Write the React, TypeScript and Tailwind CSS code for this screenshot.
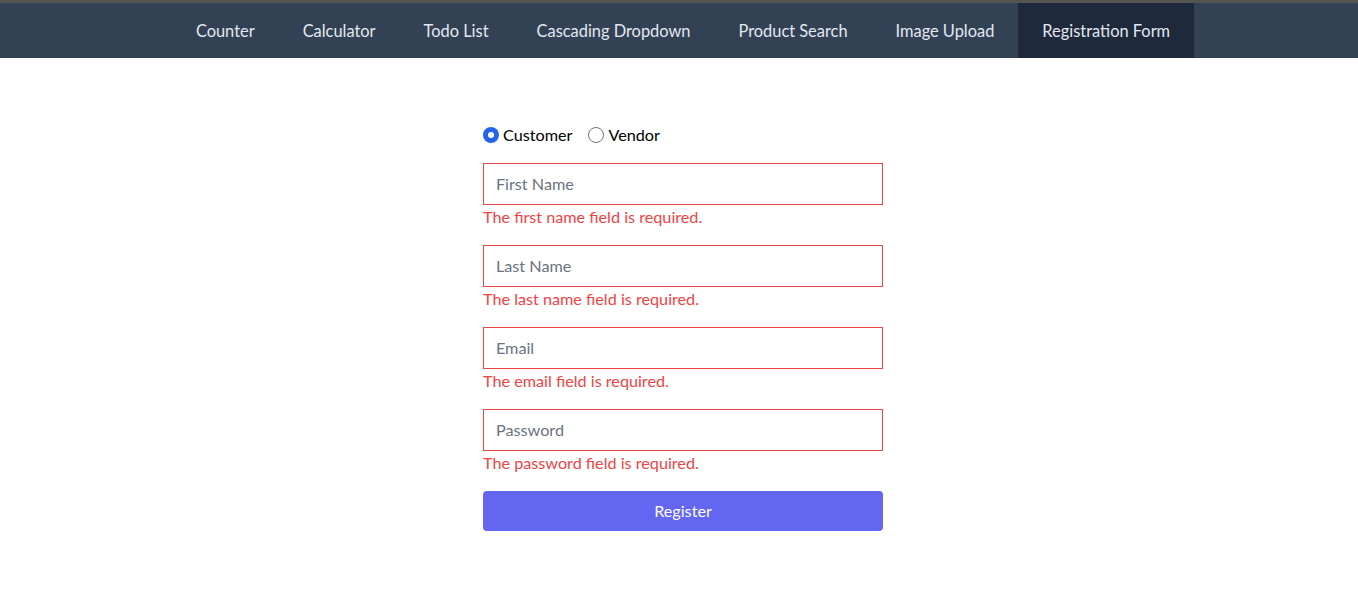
import React, { useState } from 'react';

const tabs = [
  'Counter',
  'Calculator',
  'Todo List',
  'Cascading Dropdown',
  'Product Search',
  'Image Upload',
  'Registration Form',
];

const fields = [
  { placeholder: 'First Name', error: 'The first name field is required.', type: 'text' },
  { placeholder: 'Last Name', error: 'The last name field is required.', type: 'text' },
  { placeholder: 'Email', error: 'The email field is required.', type: 'email' },
  { placeholder: 'Password', error: 'The password field is required.', type: 'password' },
];

const Radio: React.FC<{ checked: boolean; label: string; onClick: () => void }> = ({ checked, label, onClick }) => (
  <label className="flex items-center mr-4 cursor-pointer" onClick={onClick}>
    {checked ? (
      <span className="w-4 h-4 rounded-full bg-[#2563eb] flex items-center justify-center">
        <span className="w-1.5 h-1.5 rounded-full bg-white" />
      </span>
    ) : (
      <span className="w-4 h-4 rounded-full border border-[#6b7280] bg-white" />
    )}
    <span className="ml-1 text-black">{label}</span>
  </label>
);

export default function App() {
  const [active] = useState('Registration Form');
  const [role, setRole] = useState<'customer' | 'vendor'>('customer');

  return (
    <div className="min-h-screen bg-white text-[16.2px]" style={{ fontFamily: 'Lato, "Liberation Sans", sans-serif' }}>
      {/* Nav */}
      <nav className="border-t-[3px] border-[#555555] bg-[#334155] flex justify-center pl-2">
        {tabs.map((t) => (
          <a
            key={t}
            href="#"
            className={`px-6 pt-4 pb-[15px] leading-6 text-[16.4px] text-[#e2e8f0] ${t === active ? 'bg-[#1e293b]' : ''}`}
          >
            {t}
          </a>
        ))}
      </nav>

      {/* Form */}
      <div className="pl-2">
        <form className="w-[400px] mx-auto pt-[65px]" onSubmit={(e) => e.preventDefault()}>
          <div className="flex items-center mb-4 h-6">
            <Radio checked={role === 'customer'} label="Customer" onClick={() => setRole('customer')} />
            <Radio checked={role === 'vendor'} label="Vendor" onClick={() => setRole('vendor')} />
          </div>

          {fields.map((f) => (
            <div key={f.placeholder} className="mb-4">
              <input
                type={f.type}
                placeholder={f.placeholder}
                className="block w-full border border-[#ef4444] px-3 py-2 leading-6 outline-none placeholder:text-[#6b7280]"
              />
              <p className="text-[#ef4444] leading-6">{f.error}</p>
            </div>
          ))}

          <button type="submit" className="w-full h-10 rounded bg-[#6366f1] text-white">
            Register
          </button>
        </form>
      </div>
    </div>
  );
}
